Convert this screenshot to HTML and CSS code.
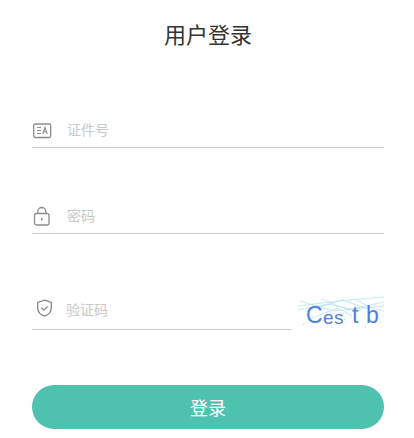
FILE: index.html
```html
<!DOCTYPE html>
<html lang="zh-CN">
<head>
    <meta charset="UTF-8">
    <meta name="viewport" content="width=device-width, initial-scale=1.0">
    <title>用户登录</title>
    <link rel="stylesheet" href="styles.css">
</head>
<body>
    <h1 class="title">用户登录</h1>
    <form class="login-form">
        <div class="field field-id">
            <svg class="icon" width="20" height="20" viewBox="0 0 20 20" fill="none" stroke="#8c8c8c">
                <rect x="1.700" y="5" width="17" height="13.500" rx="1.500" stroke-width="1.300"/>
                <path d="M5 8.500h4M5 11.500h4M5 14.500h4" stroke-width="1.100"/>
                <path d="M10.800 14.800l2.200-6.500 2.200 6.500M11.600 12.700h2.800" stroke-width="1.100"/>
            </svg>
            <input type="text" class="field-input" placeholder="证件号">
        </div>
        <div class="field field-pwd">
            <svg class="icon" width="20" height="22" viewBox="0 0 20 22" fill="none" stroke="#8c8c8c" stroke-width="1.300">
                <rect x="2.500" y="9.500" width="14.500" height="11.500" rx="2"/>
                <path d="M5.800 9.500V7.500a4 4 0 0 1 8 0V9.500"/>
                <path d="M9.800 14v2.500" stroke-width="1.600"/>
            </svg>
            <input type="password" class="field-input" placeholder="密码">
        </div>
        <div class="captcha-row">
            <div class="field field-code">
                <svg class="icon" width="21" height="20" viewBox="0 0 21 20" fill="none" stroke="#85868f" stroke-width="1.300">
                    <path d="M12.500 1.200l6.800 2.300v5.500c0 4-2.800 6.800-6.800 8.200-4-1.400-6.800-4.200-6.800-8.200V3.500z"/>
                    <path d="M9.300 8.800l2.500 2.400 4-3.800"/>
                </svg>
                <input type="text" class="field-input" placeholder="验证码">
            </div>
            <svg class="captcha" width="86" height="36" viewBox="0 0 86 36" fill="none">
                <g stroke="#b5dfec" stroke-width="0.800">
                    <path d="M0 12L40 7L86 3"/>
                    <path d="M2 7L36 17L86 12"/>
                    <path d="M8 17L44 6L70 15"/>
                    <path d="M24 5L50 16L86 8"/>
                    <path d="M0 16L30 10L62 17"/>
                    <path d="M58 6L74 14L86 17"/>
                    <path d="M14 24L40 14L54 22"/>
                </g>
                <g fill="#c6d3e0">
                    <rect x="5" y="30" width="1" height="1"/>
                    <rect x="33" y="33" width="1" height="1"/>
                    <rect x="46" y="25" width="1" height="1"/>
                    <rect x="67" y="33" width="1" height="1"/>
                    <rect x="82" y="28" width="1" height="1"/>
                </g>
                <g class="captcha-text" fill="#4f7fdc">
                    <text x="8" y="29" font-size="23">C</text>
                    <text x="25" y="30" font-size="19">e</text>
                    <text x="36" y="30" font-size="19">s</text>
                    <text x="54" y="29" font-size="23">t</text>
                    <text x="68" y="29" font-size="23">b</text>
                </g>
            </svg>
        </div>
        <button type="button" class="submit">登录</button>
    </form>
</body>
</html>
```

FILE: styles.css
```css
* {
    box-sizing: border-box;
}
body {
    margin: 0;
    padding: 0 30px 0 32px;
    background: #fff;
    font-family: "Noto Sans CJK SC", "Liberation Sans", sans-serif;
}
.title {
    margin: 0;
    height: 70px;
    line-height: 66px;
    font-size: 22px;
    font-weight: 400;
    color: #333;
    text-align: center;
}
.login-form {
    display: flex;
    flex-direction: column;
    padding-top: 38px;
}
.field {
    display: flex;
    align-items: center;
    height: 40px;
    padding-top: 2px;
    border-bottom: 1px solid #ccc;
}
.icon {
    flex: none;
    margin-right: 15px;
}
.field-pwd {
    margin-top: 46px;
}
.field-input {
    flex: 1;
    min-width: 0;
    border: none;
    outline: none;
    padding: 0;
    font-family: inherit;
    font-size: 14px;
    color: #333;
    background: transparent;
}
.field-input::placeholder {
    color: #c8c8c8;
}
.captcha-row {
    display: flex;
    align-items: flex-end;
    justify-content: space-between;
    margin-top: 56px;
}
.field-code {
    width: 259px;
    padding-top: 0;
    padding-bottom: 2px;
}
.field-code .icon {
    margin-right: 13px;
}
.captcha-text {
    font-family: "Liberation Sans", sans-serif;
}
.submit {
    height: 44px;
    margin-top: 55px;
    border: none;
    border-radius: 22px;
    background: #4ec2af;
    color: #fff;
    font-family: inherit;
    font-size: 18px;
}
```
